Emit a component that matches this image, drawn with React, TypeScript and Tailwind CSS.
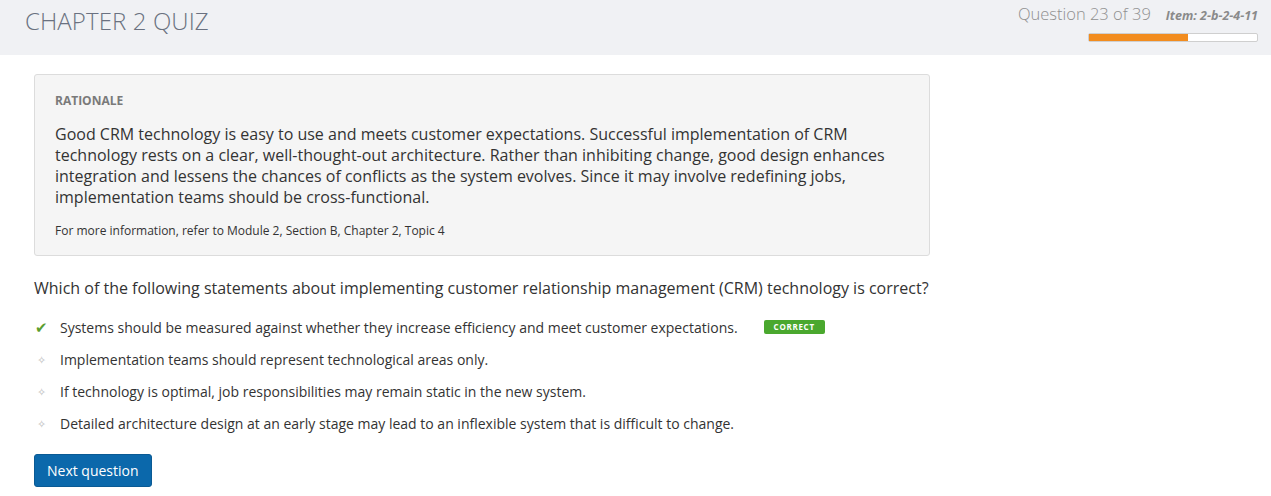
const options = [
  { text: 'Systems should be measured against whether they increase efficiency and meet customer expectations.', correct: true },
  { text: 'Implementation teams should represent technological areas only.', correct: false },
  { text: 'If technology is optimal, job responsibilities may remain static in the new system.', correct: false },
  { text: 'Detailed architecture design at an early stage may lead to an inflexible system that is difficult to change.', correct: false },
]

export default function App() {
  const current = 23
  const total = 39

  return (
    <div className="min-h-[496px] bg-white font-['Open_Sans',sans-serif]">
      {/* Header */}
      <header className="flex h-[55px] items-start justify-between bg-[#f0f1f4] pl-[25px] pr-[13px]">
        <h1 className="mt-[6px] text-[24px] font-light leading-[30px] tracking-[0.1px] text-[#6a7180]">
          CHAPTER 2 QUIZ
        </h1>
        <div className="flex flex-col items-end pt-[3px]">
          <div className="flex items-baseline gap-[15px]">
            <span className="text-[16.5px] font-light leading-[22px] text-[#8f8f8f]">
              Question {current} of {total}
            </span>
            <span className="text-[12.5px] font-bold italic text-[#8a8a8a]">Item: 2-b-2-4-11</span>
          </div>
          <div className="mt-[7px] h-[9px] w-[170px] rounded-[2px] border border-[#cfcfcf] bg-white">
            <div className="h-full bg-[#f28c1e]" style={{ width: `${(current / total) * 100}%` }} />
          </div>
        </div>
      </header>

      <main className="px-[34px] pt-[19px]">
        {/* Rationale */}
        <section className="w-[896px] rounded-[3px] border border-[#dcdcdc] bg-[#f5f5f5] px-[20px] pb-[16px] pt-[18px]">
          <h2 className="text-[12px] font-bold leading-[16px] text-[#7a7a7a]">RATIONALE</h2>
          <p className="mt-[15px] text-[16px] leading-[21px] text-[#333]">
            Good CRM technology is easy to use and meets customer expectations. Successful implementation of CRM
            technology rests on a clear, well-thought-out architecture. Rather than inhibiting change, good design enhances
            integration and lessens the chances of conflicts as the system evolves. Since it may involve redefining jobs,
            implementation teams should be cross-functional.
          </p>
          <p className="mt-[15px] text-[12px] leading-[16px] text-[#333]">
            For more information, refer to Module 2, Section B, Chapter 2, Topic 4
          </p>
        </section>

        {/* Question */}
        <p className="mt-[20px] text-[16px] leading-[24px] text-[#333]">
          Which of the following statements about implementing customer relationship management (CRM) technology is correct?
        </p>

        <ul className="mt-[11px] flex flex-col">
          {options.map((o) => (
            <li key={o.text} className="flex h-[32px] items-center text-[14px] text-[#333]">
              <span className="flex w-[26px] pl-[1px]">
                {o.correct ? (
                  <span className="text-[15px] leading-none text-[#5a9e2f]">✔</span>
                ) : (
                  <span className="pl-[2px] text-[11px] leading-none text-[#b8b8b8]">✧</span>
                )}
              </span>
              <span>{o.text}</span>
              {o.correct && (
                <span className="ml-[26px] rounded-[2px] bg-[#4aa82e] px-[10px] py-[1px] text-[8px] font-bold leading-[12px] tracking-[0.7px] text-white">
                  CORRECT
                </span>
              )}
            </li>
          ))}
        </ul>

        <button className="mt-[15px] h-[33px] rounded-[3px] border border-[#0a5a94] bg-[#0b68ab] px-[12px] text-[14px] text-white">
          Next question
        </button>
      </main>
    </div>
  )
}
